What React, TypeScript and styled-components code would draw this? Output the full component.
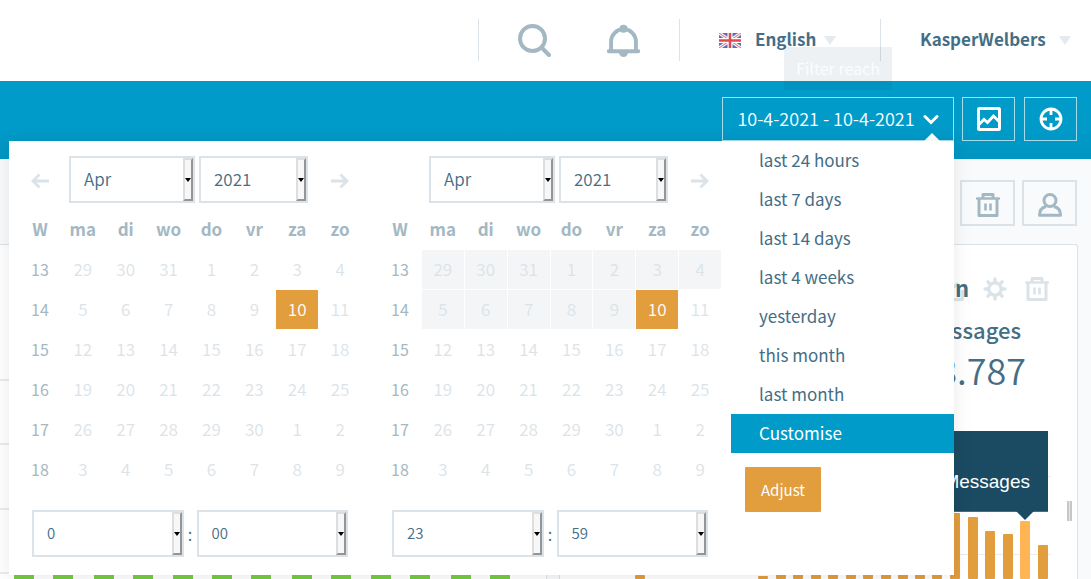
import React from "react";
import styled, { createGlobalStyle } from "styled-components";

const c = {
  text: "#446e85",
  muted: "#a3b8c3",
  faint: "#dbe3e8",
  blue: "#009bc9",
  orange: "#e29d3c",
  navy: "#1a4b63",
  green: "#76cb42",
};

const GlobalStyle = createGlobalStyle`
  *, *::before, *::after { box-sizing: border-box; }
  body { margin: 0; background: #f9fafc; overflow: hidden; }
  body, button, select {
    font-family: "Noto Sans CJK SC", "Noto Sans", sans-serif;
    font-size: 17px;
    font-weight: 350;
    line-height: 24px;
    color: ${c.text};
  }
  button { border: 0; padding: 0; background: none; cursor: pointer; }
  svg { display: block; flex: none; }
`;

const Page = styled.div`
  display: flex;
  flex-direction: column;
  height: 100vh;
  overflow: hidden;
`;

/* ---------- top bar ---------- */

const TopBar = styled.header`
  position: relative;
  flex: none;
  display: flex;
  justify-content: flex-end;
  align-items: flex-start;
  height: 81px;
  padding-top: 19px;
  background: #fff;
`;

const TopSection = styled.div<{ $width: number; $gap?: number }>`
  display: flex;
  align-items: center;
  gap: ${(p) => p.$gap ?? 0}px;
  width: ${(p) => p.$width}px;
  height: 42px;
  padding-left: 39px;
  border-left: 1px solid ${c.faint};
`;

const IconButton = styled.button`
  display: flex;
  padding-top: 1px;
  color: ${c.muted};
`;

const MenuButton = styled.button<{ $gap: number }>`
  display: flex;
  align-items: center;
  gap: ${(p) => p.$gap}px;
  padding-bottom: 2px;
  font-weight: 700;
`;

const FlagLabel = styled.span`
  margin-left: 14px;
`;

const Caret = styled.span`
  margin-top: 3px;
  border: 6px solid transparent;
  border-top: 9px solid #e4eaed;
  border-bottom: 0;
`;

const HoverTip = styled.div`
  position: absolute;
  z-index: 3;
  right: 199px;
  top: 47px;
  width: 108px;
  padding: 9px 0 10px;
  text-align: center;
  font-size: 16px;
  font-weight: 400;
  color: rgba(255, 255, 255, 0.85);
  background: rgba(26, 75, 99, 0.08);
`;

/* ---------- blue action bar ---------- */

const ActionBar = styled.div`
  flex: none;
  display: flex;
  justify-content: flex-end;
  align-items: flex-start;
  height: 78px;
  padding: 16px 14px 0;
  background: linear-gradient(${c.blue} 60%, #0095c2);
`;

const DateAnchor = styled.div`
  position: relative;
  z-index: 2;
  margin-right: 8px;
`;

const OutlineButton = styled.button<{ $width: number }>`
  display: flex;
  align-items: center;
  justify-content: center;
  gap: 8px;
  width: ${(p) => p.$width}px;
  height: 44px;
  border: 1px solid rgba(255, 255, 255, 0.65);
  color: #fff;
  font-size: 18px;
  & + & {
    margin-left: 9px;
  }
`;

const DateText = styled.span`
  padding-bottom: 2px;
`;

const Notch = styled.span`
  position: absolute;
  right: 14px;
  bottom: 0;
  border: 8px solid transparent;
  border-top: 0;
  border-bottom-color: #fff;
`;

const Panel = styled.div`
  position: absolute;
  top: 100%;
  right: 0;
  display: flex;
  padding-left: 9px;
  background: #fff;
  box-shadow: 0 2px 18px rgba(0, 0, 0, 0.09);
`;

/* ---------- calendars ---------- */

const Calendar = styled.section`
  flex: none;
  width: 344px;
  padding: 15px 0 18px;
  & + & {
    margin-left: 16px;
  }
`;

const CalendarNav = styled.div`
  display: grid;
  grid-template-columns: 47px 126px 109px 1fr;
  align-items: center;
  column-gap: 4px;
`;

const ArrowButton = styled.button<{ $edge: "start" | "end" }>`
  grid-column: ${(p) => (p.$edge === "start" ? 1 : 4)};
  justify-self: ${(p) => p.$edge};
  padding: ${(p) => (p.$edge === "start" ? "2px 0 0 13px" : "2px 13px 0 0")};
  color: ${c.faint};
`;

const SelectBox = styled.label<{ $column?: number }>`
  position: relative;
  display: block;
  flex: 1;
  grid-column: ${(p) => p.$column ?? "auto"};
`;

const Select = styled.select<{ $small?: boolean }>`
  appearance: none;
  display: block;
  width: 100%;
  height: 47px;
  padding: 0 12px 2px 13px;
  border: 2px solid ${c.faint};
  border-radius: 0;
  background: #fff;
  font-size: ${(p) => (p.$small ? 15 : 17)}px;
`;

const SelectHandle = styled.span`
  position: absolute;
  top: 2px;
  right: 2px;
  bottom: 2px;
  display: flex;
  align-items: center;
  justify-content: center;
  width: 10px;
  border: 2px solid;
  border-color: #dedede #959595 #959595 #dedede;
  background: #f7f7f7;
  pointer-events: none;
  &::before {
    content: "";
    flex: none;
    border: 3px solid transparent;
    border-top: 4px solid #000;
    border-bottom: 0;
  }
`;

const DayTable = styled.table`
  width: 344px;
  margin-top: 6px;
  table-layout: fixed;
  border-collapse: separate;
  border-spacing: 1px;
`;

const Heading = styled.th`
  height: 39px;
  padding: 0 0 2px;
  font-weight: 700;
  color: ${c.muted};
`;

const Week = styled.th`
  height: 39px;
  padding: 0 0 2px;
  font-weight: 400;
  font-size: 16px;
  color: ${c.muted};
`;

const Day = styled.td<{ $state?: "range" | "selected" }>`
  height: 39px;
  padding: 0 0 1px;
  text-align: center;
  color: ${(p) => (p.$state === "selected" ? "#fff" : c.faint)};
  background: ${(p) =>
    p.$state === "selected" ? c.orange : p.$state === "range" ? "#f3f5f7" : "none"};
`;

const TimeRow = styled.div`
  display: flex;
  align-items: center;
  margin: 20px 14px 0;
`;

const Colon = styled.span`
  width: 13px;
  text-align: center;
`;

/* ---------- range list ---------- */

const RangeColumn = styled.div`
  width: 223px;
  margin-left: 9px;
`;

const RangeList = styled.ul`
  margin: 0;
  padding: 0;
  list-style: none;
`;

const RangeOption = styled.button<{ $active?: boolean }>`
  display: block;
  width: 100%;
  height: 39px;
  padding: 0 0 1px 28px;
  text-align: left;
  font-weight: 400;
  color: ${(p) => (p.$active ? "#fff" : c.text)};
  background: ${(p) => (p.$active ? c.blue : "none")};
`;

const AdjustButton = styled.button`
  height: 45px;
  margin: 14px 0 0 14px;
  padding: 0 16px;
  border-radius: 1px;
  font-size: 15px;
  font-weight: 400;
  color: #fff;
  background: ${c.orange};
`;

/* ---------- dashboard behind the menu ---------- */

const Toolbar = styled.div`
  flex: none;
  display: flex;
  justify-content: flex-end;
  gap: 7px;
  padding: 21px 14px 18px;
`;

const ToolButton = styled.button`
  display: flex;
  align-items: center;
  justify-content: center;
  width: 55px;
  height: 46px;
  padding-top: 3px;
  border: 2px solid ${c.faint};
  color: ${c.muted};
`;

const Cards = styled.main`
  flex: 1;
  min-height: 0;
  display: grid;
  grid-template-columns: minmax(0, 547fr) minmax(0, 519fr);
  gap: 12px;
  padding-right: 13px;
`;

const Card = styled.section<{ $first?: boolean }>`
  position: relative;
  overflow: hidden;
  border: 1px solid ${c.faint};
  border-bottom: 0;
  border-left-width: ${(p) => (p.$first ? 0 : 1)}px;
  border-radius: ${(p) => (p.$first ? 0 : 3)}px 3px 0 0;
  background: #fff;
`;

const CardHead = styled.div`
  display: flex;
  align-items: center;
  justify-content: flex-end;
  gap: 18px;
  padding: 32px 28px 0 0;
  color: ${c.faint};
`;

const CardTitle = styled.h2`
  margin: 0 -4px 0 -34px;
  padding-bottom: 3px;
  font-size: 22px;
  line-height: 21px;
  font-weight: 700;
  color: ${c.text};
`;

const Metric = styled.div`
  padding: 12px 51px 0 0;
  text-align: right;
`;

const MetricLabel = styled.div`
  margin-right: 5px;
  font-size: 22px;
  line-height: 32px;
  font-weight: 500;
`;

const MetricValue = styled.div`
  font-size: 36px;
  line-height: 48px;
`;

const ChartArea = styled.div`
  position: relative;
  display: flex;
  justify-content: flex-end;
  margin-top: 38px;
  padding-right: 26px;
`;

const ChartTip = styled.div`
  position: absolute;
  top: 0;
  right: 29px;
  height: 81px;
  padding: 40px 18px 0 30px;
  border-bottom: 1px solid #446e85;
  font: 19px/22px "Liberation Sans", Arial, sans-serif;
  color: #fff;
  background: ${c.navy};
  &::after {
    content: "";
    position: absolute;
    right: 14px;
    top: 80px;
    border: 9px solid transparent;
    border-top-color: ${c.navy};
    border-bottom: 0;
  }
`;

const Grip = styled.span`
  position: absolute;
  right: 5px;
  top: 256px;
  width: 5px;
  height: 20px;
  border: solid #c6c6c6;
  border-width: 0 2px;
  background: #e6e6e6;
`;

/* ---------- icons ---------- */

const SearchIcon = () => (
  <svg width="34" height="34" viewBox="0 0 34 34" fill="none" stroke="currentColor" strokeWidth="4">
    <circle cx="14.5" cy="14.5" r="12.5" />
    <path d="M23.5 23.5 31 31" strokeLinecap="round" />
  </svg>
);

const BellIcon = () => (
  <svg width="33" height="34" viewBox="0 0 34 34" fill="currentColor">
    <path
      d="M4.2 27V17.6a12.8 12.8 0 0 1 25.6 0V27"
      fill="none"
      stroke="currentColor"
      strokeWidth="4"
    />
    <rect x="0" y="25.5" width="34" height="4.2" rx="1.5" />
    <circle cx="17" cy="4.4" r="4.2" />
    <path d="M12.500 29h9a4.500 4.500 0 0 1-9 0Z" />
  </svg>
);

const FlagIcon = () => (
  <svg width="22" height="15" viewBox="0 0 22 15">
    <rect width="22" height="15" fill="#5a6db8" />
    <path d="M0 0 22 15M22 0 0 15" stroke="#f3eef4" strokeWidth="3.4" />
    <path d="M0 0 22 15M22 0 0 15" stroke="#e0707c" strokeWidth="1" />
    <path d="M11 0v15M0 7.5h22" stroke="#fff" strokeWidth="5" />
    <path d="M11 0v15M0 7.5h22" stroke="#e04a52" strokeWidth="2.6" />
  </svg>
);

const ChevronIcon = () => (
  <svg width="16" height="12" viewBox="0 0 16 12" fill="none" stroke="currentColor" strokeWidth="3">
    <path d="m2 3.5 6 6 6-6" strokeLinecap="round" />
  </svg>
);

const ChartIcon = () => (
  <svg width="24" height="24" viewBox="0 0 24 24" fill="none" stroke="currentColor">
    <rect x="1.500" y="1.500" width="21" height="21" rx="1" strokeWidth="3" />
    <path d="M2 17.500 7 12.500 10.500 15.500 16.500 9 22 14.500" strokeWidth="2.800" />
  </svg>
);

const TargetIcon = () => (
  <svg width="24" height="24" viewBox="0 0 24 24" fill="none" stroke="currentColor">
    <circle cx="12" cy="12" r="10" strokeWidth="2.800" />
    <path d="M12 2v6M12 16v6M2 12h6M16 12h6" strokeWidth="2.800" />
  </svg>
);

const TrashIcon = () => (
  <svg width="24" height="24" viewBox="0 0 24 24" fill="none" stroke="currentColor">
    <path d="M1 5.500h22" strokeWidth="2.400" strokeLinecap="round" />
    <path d="M7 5V1.500h10V5" strokeWidth="3" strokeLinejoin="round" />
    <path d="M3 6v16.500h18V6" strokeWidth="3" strokeLinejoin="round" />
    <path d="M9.500 10.500v7M14.500 10.500v7" strokeWidth="2.600" />
  </svg>
);

const UserIcon = () => (
  <svg width="24" height="24" viewBox="0 0 24 24" fill="none" stroke="currentColor" strokeWidth="3">
    <circle cx="12" cy="7.500" r="6" />
    <path d="M8 13.500c-4 1-6.500 4-6.500 8.800h21c0-4.800-2.500-7.800-6.500-8.800" strokeLinejoin="round" />
  </svg>
);

const GearIcon = () => (
  <svg width="24" height="24" viewBox="0 0 24 24" fill="none" stroke="currentColor">
    <circle cx="12" cy="12" r="6.200" strokeWidth="3.200" />
    <path
      d="M12 2v3M12 19v3M2 12h3M19 12h3M4.900 4.900l2 2M17.100 17.100l2 2M4.900 19.100l2-2M17.100 6.900l2-2"
      strokeWidth="3.400"
      strokeLinecap="round"
    />
  </svg>
);

const EditIcon = () => (
  <svg width="24" height="24" viewBox="0 0 24 24" fill="none" stroke="currentColor" strokeWidth="2.800">
    <path d="M12 3H2v19.500h20.500V13" strokeLinejoin="round" />
    <path d="m9 15 9-9" />
  </svg>
);

const ArrowIcon = ({ back }: { back?: boolean }) => (
  <svg width="18" height="16" viewBox="0 0 18 16" fill="none" stroke="currentColor" strokeWidth="2.800">
    <path d={back ? "M18 8H2M8.500 1.500 2 8l6.500 6.500" : "M0 8h16M9.500 1.500 16 8l-6.500 6.500"} />
  </svg>
);

/* ---------- data ---------- */

const ranges = [
  "last 24 hours",
  "last 7 days",
  "last 14 days",
  "last 4 weeks",
  "yesterday",
  "this month",
  "last month",
  "Customise",
];

const weekdays = ["W", "ma", "di", "wo", "do", "vr", "za", "zo"];

const weeks = [
  { week: 13, days: [29, 30, 31, 1, 2, 3, 4] },
  { week: 14, days: [5, 6, 7, 8, 9, 10, 11] },
  { week: 15, days: [12, 13, 14, 15, 16, 17, 18] },
  { week: 16, days: [19, 20, 21, 22, 23, 24, 25] },
  { week: 17, days: [26, 27, 28, 29, 30, 1, 2] },
  { week: 18, days: [3, 4, 5, 6, 7, 8, 9] },
];

const greenBars = [14, 53, 94, 133, 173, 212, 251, 292, 331, 371, 410, 451, 490];

/* x position and top edge of each bar in the messages chart */
const orangeBars = [
  [84, 144], [207, 145], [225, 143], [242, 141], [260, 142], [277, 140], [295, 141], [312, 139],
  [330, 140], [347, 138], [364, 136], [381, 130], [399, 82], [417, 86], [434, 100], [452, 103],
  [469, 90], [487, 114],
];

/* ---------- components ---------- */

function Dropdown({ label, value, small, column }: {
  label: string;
  value: string;
  small?: boolean;
  column?: number;
}) {
  return (
    <SelectBox $column={column}>
      <Select aria-label={label} defaultValue={value} $small={small}>
        <option>{value}</option>
      </Select>
      <SelectHandle />
    </SelectBox>
  );
}

function MonthPicker({ name, first, hour, minute }: {
  name: string;
  first?: boolean;
  hour: string;
  minute: string;
}) {
  const dayState = (row: number, col: number) => {
    if (row === 1 && col === 5) return "selected" as const;
    if (!first && (row === 0 || (row === 1 && col < 5))) return "range" as const;
    return undefined;
  };
  return (
    <Calendar aria-label={name}>
      <CalendarNav>
        {first && (
          <ArrowButton $edge="start" aria-label="Previous month">
            <ArrowIcon back />
          </ArrowButton>
        )}
        <Dropdown label={`${name} month`} value="Apr" column={2} />
        <Dropdown label={`${name} year`} value="2021" column={3} />
        <ArrowButton $edge="end" aria-label="Next month">
          <ArrowIcon />
        </ArrowButton>
      </CalendarNav>
      <DayTable>
        <thead>
          <tr>
            {weekdays.map((d) => (
              <Heading key={d} scope="col">{d}</Heading>
            ))}
          </tr>
        </thead>
        <tbody>
          {weeks.map(({ week, days }, row) => (
            <tr key={week}>
              <Week scope="row">{week}</Week>
              {days.map((d, col) => (
                <Day key={col} $state={dayState(row, col)}>{d}</Day>
              ))}
            </tr>
          ))}
        </tbody>
      </DayTable>
      <TimeRow>
        <Dropdown label={`${name} hour`} value={hour} small />
        <Colon>:</Colon>
        <Dropdown label={`${name} minute`} value={minute} small />
      </TimeRow>
    </Calendar>
  );
}

export default function App() {
  return (
    <Page>
      <GlobalStyle />
      <TopBar>
        <TopSection $width={201} $gap={55}>
          <IconButton aria-label="Search"><SearchIcon /></IconButton>
          <IconButton aria-label="Notifications"><BellIcon /></IconButton>
        </TopSection>
        <TopSection $width={201}>
          <FlagIcon />
          <FlagLabel>
            <MenuButton $gap={8}>English<Caret /></MenuButton>
          </FlagLabel>
        </TopSection>
        <TopSection $width={211}>
          <MenuButton $gap={13}>KasperWelbers<Caret /></MenuButton>
        </TopSection>
        <HoverTip role="tooltip">Filter reach</HoverTip>
      </TopBar>

      <ActionBar>
        <DateAnchor>
          <OutlineButton $width={232} aria-expanded="true">
            <DateText>10-4-2021 - 10-4-2021</DateText>
            <ChevronIcon />
          </OutlineButton>
          <Notch />
          <Panel>
            <MonthPicker name="From" first hour="0" minute="00" />
            <MonthPicker name="Until" hour="23" minute="59" />
            <RangeColumn>
              <RangeList>
                {ranges.map((r) => (
                  <li key={r}>
                    <RangeOption $active={r === "Customise"}>{r}</RangeOption>
                  </li>
                ))}
              </RangeList>
              <AdjustButton>Adjust</AdjustButton>
            </RangeColumn>
          </Panel>
        </DateAnchor>
        <OutlineButton $width={53} aria-label="Chart"><ChartIcon /></OutlineButton>
        <OutlineButton $width={53} aria-label="Target"><TargetIcon /></OutlineButton>
      </ActionBar>

      <Toolbar>
        <ToolButton aria-label="Delete"><TrashIcon /></ToolButton>
        <ToolButton aria-label="User"><UserIcon /></ToolButton>
      </Toolbar>

      <Cards>
        <Card $first>
          <svg width="100%" height="335">
            {[134, 198, 263, 327].map((y) => (
              <rect key={y} x="0" y={y} width="100%" height="2" fill="#e6ecef" />
            ))}
            {greenBars.map((x) => (
              <rect key={x} x={x} y="310" width="20" height="25" fill={c.green} />
            ))}
          </svg>
        </Card>
        <Card>
          <CardHead>
            <EditIcon />
            <CardTitle>In</CardTitle>
            <GearIcon />
            <TrashIcon />
          </CardHead>
          <Metric>
            <MetricLabel>Messages</MetricLabel>
            <MetricValue>8.787</MetricValue>
          </Metric>
          <ChartArea>
            <svg width="500" height="148" viewBox="0 0 500 148">
              <path d="M0 45.500h500M0 123.500h500" stroke="#e8eced" />
              {orangeBars.map(([x, y]) => (
                <rect
                  key={x}
                  x={x}
                  y={y}
                  width="10"
                  height={148 - y}
                  rx="1"
                  fill={x === 469 ? "#ffb554" : c.orange}
                />
              ))}
            </svg>
            <ChartTip>Messages</ChartTip>
          </ChartArea>
          <Grip />
        </Card>
      </Cards>
    </Page>
  );
}
